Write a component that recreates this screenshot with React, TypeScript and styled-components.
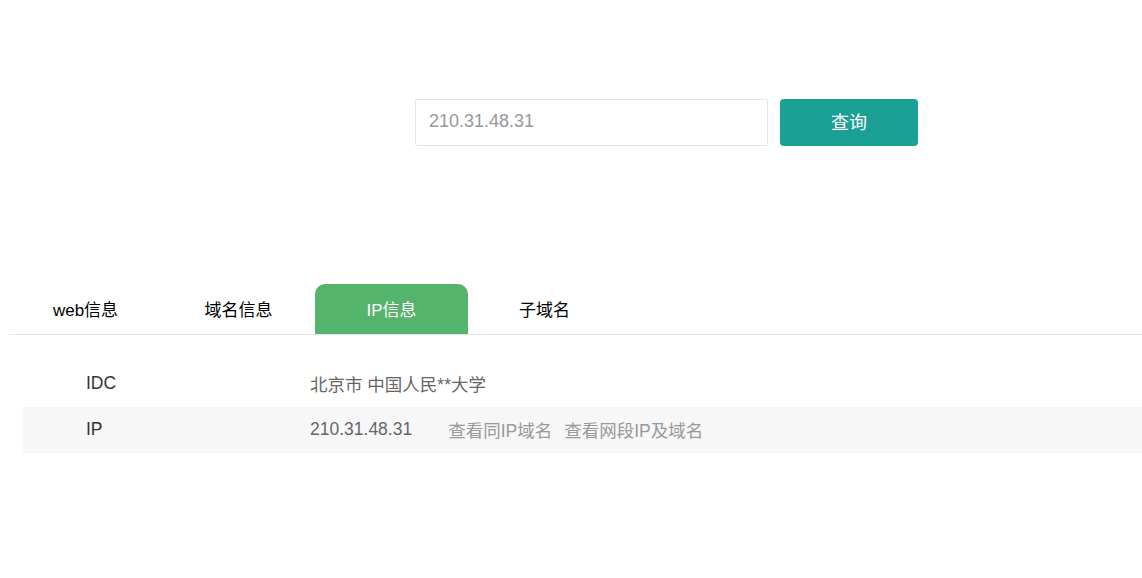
import React from "react";
import styled, { createGlobalStyle } from "styled-components";

const GlobalStyle = createGlobalStyle`
  html, body {
    margin: 0;
    padding: 0;
    background: #fff;
    font-family: "Liberation Sans", "Noto Sans CJK SC", sans-serif;
  }
`;

const Page = styled.div`
  width: 1142px;
  height: 578px;
  overflow: hidden;
`;

const SearchBar = styled.div`
  display: flex;
  gap: 12px;
  padding: 99px 0 0 415px;
`;

const SearchInput = styled.input`
  box-sizing: border-box;
  width: 353px;
  height: 47px;
  border: 1px solid #e6e6e6;
  border-radius: 2px;
  padding: 0 13px 2px;
  font-family: inherit;
  font-size: 18px;
  color: #999;
  outline: none;
`;

const SearchButton = styled.button`
  width: 138px;
  height: 47px;
  border: none;
  border-radius: 4px;
  padding: 0 0 4px;
  background: #1aa094;
  color: #fff;
  font-family: inherit;
  font-size: 18px;
`;

const TabBar = styled.div`
  display: flex;
  margin: 138px 0 0 9px;
  border-bottom: 1px solid #e6e6e6;
`;

const Tab = styled.div<{ $active?: boolean }>`
  width: 153px;
  height: 50px;
  display: flex;
  align-items: center;
  justify-content: center;
  padding-bottom: 2px;
  box-sizing: border-box;
  font-size: 17px;
  border-radius: 10px 10px 0 0;
  color: ${(p) => (p.$active ? "#fff" : "#000")};
  background: ${(p) => (p.$active ? "#54b46c" : "transparent")};
`;

const Table = styled.div`
  margin: 26px 0 0 23px;
`;

const Row = styled.div<{ $shaded?: boolean }>`
  display: flex;
  align-items: center;
  height: 46px;
  padding-bottom: 2px;
  box-sizing: border-box;
  font-size: 17.5px;
  background: ${(p) => (p.$shaded ? "#f7f7f7" : "transparent")};
`;

const Label = styled.div`
  width: 224px;
  padding-left: 63px;
  color: #333;
`;

const Value = styled.div`
  display: flex;
  align-items: center;
  color: #666;
`;

const Link = styled.span<{ $gap: number }>`
  margin-left: ${(p) => p.$gap}px;
  color: #999;
`;

export default function App() {
  const tabs = ["web信息", "域名信息", "IP信息", "子域名"];
  return (
    <Page>
      <GlobalStyle />
      <SearchBar>
        <SearchInput defaultValue="210.31.48.31" />
        <SearchButton>查询</SearchButton>
      </SearchBar>
      <TabBar>
        {tabs.map((t) => (
          <Tab key={t} $active={t === "IP信息"}>
            {t}
          </Tab>
        ))}
      </TabBar>
      <Table>
        <Row>
          <Label>IDC</Label>
          <Value>北京市 中国人民**大学</Value>
        </Row>
        <Row $shaded>
          <Label>IP</Label>
          <Value>
            210.31.48.31
            <Link $gap={36}>查看同IP域名</Link>
            <Link $gap={12}>查看网段IP及域名</Link>
          </Value>
        </Row>
      </Table>
    </Page>
  );
}
